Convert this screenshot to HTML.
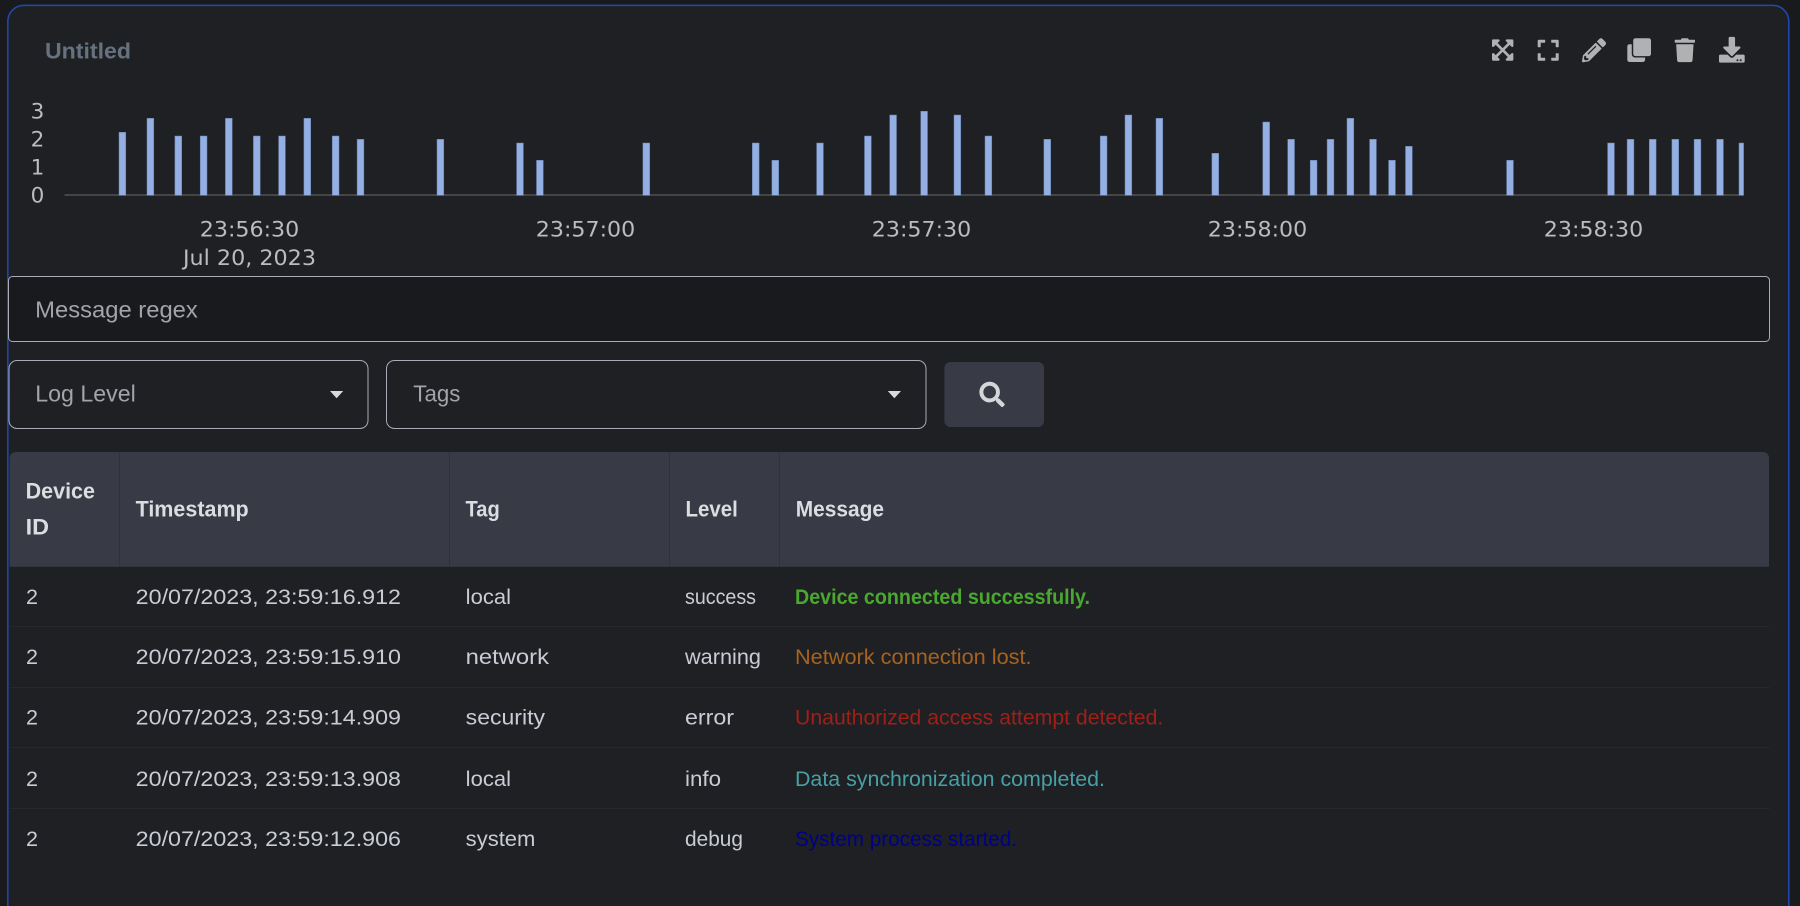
<!DOCTYPE html>
<html lang="en"><head><meta charset="utf-8"><title>Untitled</title>
<style>
html,body{margin:0;padding:0;background:#191a1e;width:1800px;height:906px;overflow:hidden}
svg{display:block}
text{font-family:"Liberation Sans",sans-serif;white-space:pre}
.ax text{font-family:"DejaVu Sans",sans-serif;font-size:21.5px;fill:#bcbcbc}
.th{font-size:22px;font-weight:700;fill:#dcdde0}
.td{font-size:21.6px;fill:#c9cbd5}
.msg{font-size:21.6px}
.ph{font-size:23.5px;fill:#a2a4a9}
.ic{fill:#b0b1b2}
.bars rect{fill:#93afe3;stroke:#6a80aa;stroke-width:.5}
</style></head><body>
<svg width="1800" height="906" viewBox="0 0 1800 906" xmlns="http://www.w3.org/2000/svg">
<rect width="1800" height="906" fill="#191a1e"/>
<path d="M7.8 906V21.4a16 16 0 0 1 16-16H1772.8a16 16 0 0 1 16 16V906" fill="#1e2024" stroke="#2149ae" stroke-width="1.5"/>

<text x="45" y="58.4" font-size="22" font-weight="700" fill="#66727f" textLength="86" lengthAdjust="spacingAndGlyphs">Untitled</text>

<!-- toolbar icons -->
<g class="ic">
<path transform="translate(1492 37.8) scale(.0477)" d="M448 344v112a23.94 23.94 0 0 1-24 24H312c-21.39 0-32.09-25.9-17-41l36.2-36.2L224 295.6 116.77 402.9 153 439c15.09 15.1 4.39 41-17 41H24a23.94 23.94 0 0 1-24-24V344c0-21.4 25.89-32.1 41-17l36.19 36.2L184.46 256 77.18 148.7 41 185c-15.1 15.1-41 4.4-41-17V56a23.94 23.94 0 0 1 24-24h112c21.39 0 32.09 25.9 17 41l-36.2 36.2L224 216.4l107.23-107.3L295 73c-15.09-15.1-4.39-41 17-41h112a23.94 23.94 0 0 1 24 24v112c0 21.4-25.89 32.1-41 17l-36.19-36.2L263.54 256l107.28 107.3L407 327.1c15.1-15.2 41-4.5 41 16.9z"/>
<path transform="translate(1537.7 38.2) scale(.0469)" d="M0 180V56c0-13.3 10.7-24 24-24h124c6.6 0 12 5.4 12 12v40c0 6.6-5.4 12-12 12H64v84c0 6.6-5.4 12-12 12H12c-6.6 0-12-5.4-12-12zm288-136v40c0 6.6 5.4 12 12 12h84v84c0 6.6 5.4 12 12 12h40c6.6 0 12-5.4 12-12V56c0-13.3-10.7-24-24-24H300c-6.6 0-12 5.4-12 12zm148 276h-40c-6.6 0-12 5.4-12 12v84h-84c-6.6 0-12 5.4-12 12v40c0 6.6 5.4 12 12 12h124c13.3 0 24-10.7 24-24V332c0-6.6-5.4-12-12-12zM160 468v-40c0-6.6-5.4-12-12-12H64v-84c0-6.6-5.4-12-12-12H12c-6.6 0-12 5.4-12 12v124c0 13.3 10.7 24 24 24h124c6.6 0 12-5.4 12-12z"/>
<path transform="translate(1582 38.3) scale(.0469)" d="M497.9 142.1l-46.1 46.1c-4.7 4.7-12.3 4.7-17 0l-111-111c-4.7-4.7-4.7-12.3 0-17l46.1-46.1c18.7-18.7 49.1-18.7 67.9 0l60.1 60.1c18.8 18.7 18.8 49.1 0 67.9zM284.2 99.8L21.6 362.4.4 483.9c-2.9 16.4 11.4 30.6 27.8 27.8l121.5-21.3 262.6-262.6c4.7-4.7 4.7-12.3 0-17l-111-111c-4.8-4.7-12.4-4.7-17.1 0zM124.1 339.9c-5.5-5.5-5.5-14.3 0-19.8l154-154c5.5-5.5 14.3-5.5 19.8 0s5.5 14.3 0 19.8l-154 154c-5.5 5.5-14.3 5.5-19.8 0zM88 424h48v36.3l-64.5 11.3-31.1-31.1L51.7 376H88v48z"/>
<path transform="translate(1627.3 38.3) scale(.0463)" d="M464 0c26.51 0 48 21.49 48 48v288c0 26.51-21.49 48-48 48H176c-26.51 0-48-21.49-48-48V48c0-26.51 21.49-48 48-48h288M176 416c-44.112 0-80-35.888-80-80V128H48c-26.51 0-48 21.49-48 48v288c0 26.51 21.49 48 48 48h288c26.51 0 48-21.49 48-48v-48H176z"/>
<path transform="translate(1674.7 38.3) scale(.0453 .0465)" d="M432 32H312l-9.4-18.7A24 24 0 0 0 281.1 0H166.8a23.72 23.72 0 0 0-21.4 13.3L136 32H16A16 16 0 0 0 0 48v32a16 16 0 0 0 16 16h416a16 16 0 0 0 16-16V48a16 16 0 0 0-16-16zM53.2 467a48 48 0 0 0 47.9 45h245.8a48 48 0 0 0 47.9-45L416 128H32z"/>
<path transform="translate(1719 36.9) scale(.0502)" d="M216 0h80c13.3 0 24 10.7 24 24v168h87.7c17.8 0 26.7 21.5 14.1 34.1L269.7 378.3c-7.5 7.5-19.8 7.5-27.3 0L90.1 226.1c-12.6-12.6-3.7-34.1 14.1-34.1H192V24c0-13.3 10.7-24 24-24zm296 376v112c0 13.3-10.7 24-24 24H24c-13.3 0-24-10.7-24-24V376c0-13.3 10.7-24 24-24h146.7l49 49c20.1 20.1 52.5 20.1 72.6 0l49-49H488c13.3 0 24 10.7 24 24zm-124 88c0-11-9-20-20-20s-20 9-20 20 9 20 20 20 20-9 20-20zm64 0c0-11-9-20-20-20s-20 9-20 20 9 20 20 20 20-9 20-20z"/>
</g>

<!-- chart -->
<g class="ax" text-anchor="middle">
<text x="37.5" y="118.7">3</text><text x="37.5" y="146.7">2</text><text x="37.5" y="174.7">1</text><text x="37.5" y="202.7">0</text>
</g>
<rect x="64.5" y="194" width="1679" height="2" fill="#444546"/>
<g class="bars">
<rect x="119" y="132.3" width="6.8" height="63"/>
<rect x="147" y="118.3" width="6.8" height="77"/>
<rect x="174.9" y="136" width="6.8" height="59.3"/>
<rect x="200.2" y="136" width="6.8" height="59.3"/>
<rect x="225.4" y="118.3" width="6.8" height="77"/>
<rect x="253.4" y="136" width="6.8" height="59.3"/>
<rect x="278.6" y="136" width="6.8" height="59.3"/>
<rect x="303.9" y="118.3" width="6.8" height="77"/>
<rect x="332.2" y="136" width="6.8" height="59.3"/>
<rect x="357.1" y="139.3" width="6.8" height="56"/>
<rect x="437" y="139.3" width="6.8" height="56"/>
<rect x="516.6" y="143" width="6.8" height="52.3"/>
<rect x="536.5" y="160.3" width="6.8" height="35"/>
<rect x="642.9" y="143" width="6.8" height="52.3"/>
<rect x="752.3" y="143" width="6.8" height="52.3"/>
<rect x="771.9" y="160.3" width="6.8" height="35"/>
<rect x="816.6" y="143" width="6.8" height="52.3"/>
<rect x="864.5" y="136" width="6.8" height="59.3"/>
<rect x="889.7" y="115" width="6.8" height="80.3"/>
<rect x="920.7" y="111.3" width="6.8" height="84"/>
<rect x="954" y="115" width="6.8" height="80.3"/>
<rect x="985" y="136" width="6.8" height="59.3"/>
<rect x="1043.9" y="139.3" width="6.8" height="56"/>
<rect x="1100.2" y="136" width="6.8" height="59.3"/>
<rect x="1125" y="115" width="6.8" height="80.3"/>
<rect x="1156" y="118.3" width="6.8" height="77"/>
<rect x="1211.9" y="153.3" width="6.8" height="42"/>
<rect x="1262.8" y="122" width="6.8" height="73.3"/>
<rect x="1287.7" y="139.3" width="6.8" height="56"/>
<rect x="1310.2" y="160.3" width="6.8" height="35"/>
<rect x="1327.1" y="139.3" width="6.8" height="56"/>
<rect x="1347" y="118.3" width="6.8" height="77"/>
<rect x="1369.6" y="139.3" width="6.8" height="56"/>
<rect x="1388.6" y="160.3" width="6.8" height="35"/>
<rect x="1405.5" y="146.3" width="6.8" height="49"/>
<rect x="1506.6" y="160.3" width="6.8" height="35"/>
<rect x="1607.6" y="143" width="6.8" height="52.3"/>
<rect x="1627.1" y="139.3" width="6.8" height="56"/>
<rect x="1649.3" y="139.3" width="6.8" height="56"/>
<rect x="1671.9" y="139.3" width="6.8" height="56"/>
<rect x="1694.1" y="139.3" width="6.8" height="56"/>
<rect x="1716.6" y="139.3" width="6.8" height="56"/>
<rect x="1739" y="143" width="4.6" height="52.3"/>
</g>
<g class="ax">
<text x="199.75" y="236.7" textLength="99.5" lengthAdjust="spacingAndGlyphs">23:56:30</text>
<text x="183" y="265" textLength="133" lengthAdjust="spacingAndGlyphs">Jul 20, 2023</text>
<text x="535.75" y="236.7" textLength="99.5" lengthAdjust="spacingAndGlyphs">23:57:00</text>
<text x="871.75" y="236.7" textLength="99.5" lengthAdjust="spacingAndGlyphs">23:57:30</text>
<text x="1207.75" y="236.7" textLength="99.5" lengthAdjust="spacingAndGlyphs">23:58:00</text>
<text x="1543.75" y="236.7" textLength="99.5" lengthAdjust="spacingAndGlyphs">23:58:30</text>
</g>

<!-- regex input -->
<rect x="8.5" y="276.5" width="1761" height="65" rx="4" fill="#191a1e" stroke="#a9abb6" stroke-width="1"/>
<text class="ph" x="35.2" y="317.6" textLength="162.6" lengthAdjust="spacingAndGlyphs">Message regex</text>

<!-- selects -->
<rect x="9" y="360.5" width="359" height="68" rx="8" fill="#1e2024" stroke="#a9abb6" stroke-width="1"/>
<text class="ph" x="35.2" y="401.6" textLength="100.6" lengthAdjust="spacingAndGlyphs">Log Level</text>
<path d="M330 391h13.2l-6.6 7.3z" fill="#d8d9db"/>
<rect x="386.5" y="360.5" width="539.5" height="68" rx="8" fill="#1e2024" stroke="#a9abb6" stroke-width="1"/>
<text class="ph" x="413.3" y="401.6" textLength="47.1" lengthAdjust="spacingAndGlyphs">Tags</text>
<path d="M887.8 391h13.2l-6.6 7.3z" fill="#d8d9db"/>

<!-- search button -->
<rect x="944.4" y="362" width="99.6" height="65" rx="6" fill="#383b46"/>
<path fill="#d5d6d8" transform="translate(979.4 381.8) scale(.0494)" d="M505 442.7L405.3 343c-4.5-4.5-10.6-7-17-7H372c27.6-35.3 44-79.7 44-128C416 93.1 322.9 0 208 0S0 93.1 0 208s93.1 208 208 208c48.3 0 92.7-16.4 128-44v16.3c0 6.4 2.5 12.5 7 17l99.7 99.7c9.4 9.4 24.6 9.4 33.9 0l28.3-28.3c9.4-9.4 9.4-24.6.1-34zM208 336c-70.7 0-128-57.2-128-128 0-70.7 57.2-128 128-128 70.7 0 128 57.2 128 128 0 70.7-57.2 128-128 128z"/>

<!-- table header -->
<path d="M9.6 566.7V458a6 6 0 0 1 6-6H1763a6 6 0 0 1 6 6v108.7z" fill="#383b46"/>
<g fill="#2f323b">
<rect x="119" y="452" width="1" height="114.7"/>
<rect x="449" y="452" width="1" height="114.7"/>
<rect x="669" y="452" width="1" height="114.7"/>
<rect x="779" y="452" width="1" height="114.7"/>
</g>
<text class="th" x="25.6" y="498.7" textLength="69.4" lengthAdjust="spacingAndGlyphs">Device</text>
<text class="th" x="25.6" y="534.7" textLength="23.4" lengthAdjust="spacingAndGlyphs">ID</text>
<text class="th" x="135.6" y="516.7" textLength="113.1" lengthAdjust="spacingAndGlyphs">Timestamp</text>
<text class="th" x="465.5" y="516.7" textLength="34.3" lengthAdjust="spacingAndGlyphs">Tag</text>
<text class="th" x="685.5" y="516.7" textLength="52.3" lengthAdjust="spacingAndGlyphs">Level</text>
<text class="th" x="795.8" y="516.7" textLength="88.2" lengthAdjust="spacingAndGlyphs">Message</text>

<!-- row separators -->
<g fill="#26282c">
<rect x="9.6" y="626" width="1760" height="1"/>
<rect x="9.6" y="687" width="1760" height="1"/>
<rect x="9.6" y="747" width="1760" height="1"/>
<rect x="9.6" y="808" width="1760" height="1"/>
</g>

<!-- rows -->
<text class="td" x="26" y="603.8" textLength="12" lengthAdjust="spacingAndGlyphs">2</text>
<text class="td" x="135.7" y="603.8" textLength="265.3" lengthAdjust="spacingAndGlyphs">20/07/2023, 23:59:16.912</text>
<text class="td" x="465.7" y="603.8" textLength="45.3" lengthAdjust="spacingAndGlyphs">local</text>
<text class="td" x="685" y="603.8" textLength="71" lengthAdjust="spacingAndGlyphs">success</text>
<text class="msg" x="795" y="603.8" font-weight="700" fill="#4aa82e" textLength="295" lengthAdjust="spacingAndGlyphs">Device connected successfully.</text>

<text class="td" x="26" y="663.8" textLength="12" lengthAdjust="spacingAndGlyphs">2</text>
<text class="td" x="135.7" y="663.8" textLength="265.3" lengthAdjust="spacingAndGlyphs">20/07/2023, 23:59:15.910</text>
<text class="td" x="465.7" y="663.8" textLength="83.3" lengthAdjust="spacingAndGlyphs">network</text>
<text class="td" x="685" y="663.8" textLength="76" lengthAdjust="spacingAndGlyphs">warning</text>
<text class="msg" x="795" y="663.8" fill="#a8621f" textLength="236.6" lengthAdjust="spacingAndGlyphs">Network connection lost.</text>

<text class="td" x="26" y="724.4" textLength="12" lengthAdjust="spacingAndGlyphs">2</text>
<text class="td" x="135.7" y="724.4" textLength="265.3" lengthAdjust="spacingAndGlyphs">20/07/2023, 23:59:14.909</text>
<text class="td" x="465.7" y="724.4" textLength="79.3" lengthAdjust="spacingAndGlyphs">security</text>
<text class="td" x="685" y="724.4" textLength="49" lengthAdjust="spacingAndGlyphs">error</text>
<text class="msg" x="795" y="724.4" fill="#a01f17" textLength="368.3" lengthAdjust="spacingAndGlyphs">Unauthorized access attempt detected.</text>

<text class="td" x="26" y="785.8" textLength="12" lengthAdjust="spacingAndGlyphs">2</text>
<text class="td" x="135.7" y="785.8" textLength="265.3" lengthAdjust="spacingAndGlyphs">20/07/2023, 23:59:13.908</text>
<text class="td" x="465.7" y="785.8" textLength="45.3" lengthAdjust="spacingAndGlyphs">local</text>
<text class="td" x="685" y="785.8" textLength="36" lengthAdjust="spacingAndGlyphs">info</text>
<text class="msg" x="795" y="785.8" fill="#46a0a5" textLength="310" lengthAdjust="spacingAndGlyphs">Data synchronization completed.</text>

<text class="td" x="26" y="845.8" textLength="12" lengthAdjust="spacingAndGlyphs">2</text>
<text class="td" x="135.7" y="845.8" textLength="265.3" lengthAdjust="spacingAndGlyphs">20/07/2023, 23:59:12.906</text>
<text class="td" x="465.7" y="845.8" textLength="69.7" lengthAdjust="spacingAndGlyphs">system</text>
<text class="td" x="685" y="845.8" textLength="58" lengthAdjust="spacingAndGlyphs">debug</text>
<text class="msg" x="795" y="845.8" fill="#00008b" textLength="222" lengthAdjust="spacingAndGlyphs">System process started.</text>
</svg>
</body></html>
